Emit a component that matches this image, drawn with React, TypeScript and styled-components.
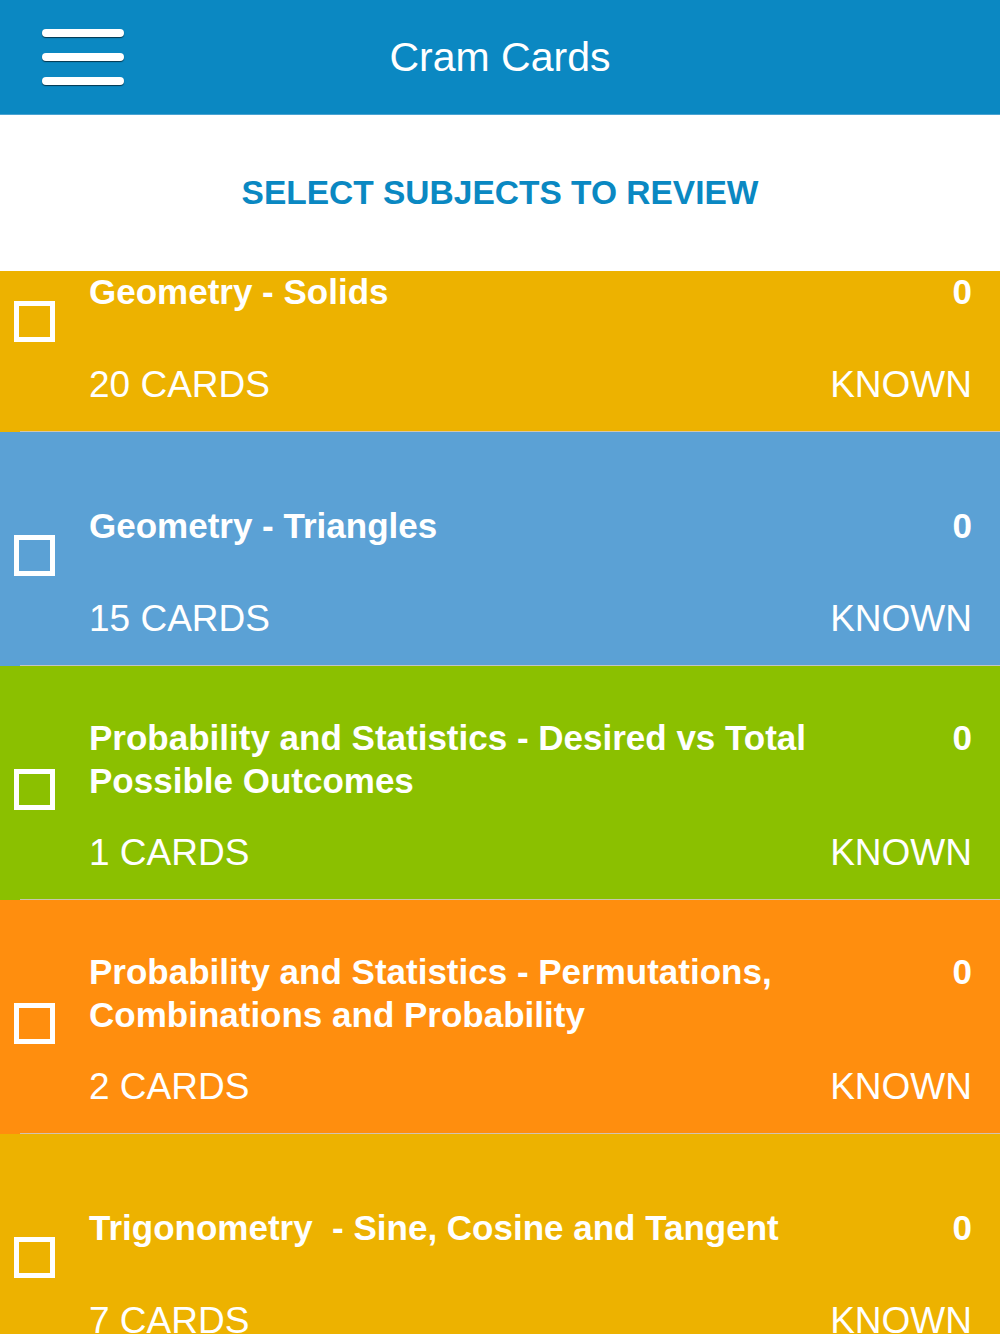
import React from "react";
import styled, { createGlobalStyle } from "styled-components";

const GlobalStyle = createGlobalStyle`
  html, body {
    margin: 0;
    padding: 0;
    background: #ffffff;
  }
  body {
    font-family: "Liberation Sans", Arial, Helvetica, sans-serif;
    -webkit-font-smoothing: antialiased;
  }
`;

const Screen = styled.div`
  width: 1000px;
  height: 1334px;
  display: flex;
  flex-direction: column;
  overflow: hidden;
`;

const Header = styled.header`
  flex: none;
  height: 114px;
  background: #0b88c2;
  border-bottom: 1px solid #4aa3d2;
  display: grid;
  grid-template-columns: 1fr auto 1fr;
  align-items: center;
  padding: 0 42px;
`;

const MenuButton = styled.button`
  justify-self: start;
  display: flex;
  flex-direction: column;
  gap: 16px;
  padding: 0;
  margin: 0;
  border: none;
  background: transparent;
  cursor: pointer;
`;

const Bar = styled.span`
  display: block;
  width: 82px;
  height: 8px;
  border-radius: 4px;
  background: #ffffff;
  box-shadow: 0 1px 1px rgba(0, 0, 0, 0.6);
`;

const HeaderTitle = styled.h1`
  margin: 0;
  color: #ffffff;
  font-size: 41px;
  font-weight: 400;
  line-height: 1;
`;

const Prompt = styled.h2`
  flex: none;
  height: 156px;
  margin: 0;
  display: flex;
  align-items: center;
  justify-content: center;
  color: #0a88c2;
  font-size: 33.5px;
  font-weight: 700;
`;

const ListViewport = styled.div`
  flex: 1;
  overflow: hidden;
`;

const List = styled.ul<{ $scroll: number }>`
  list-style: none;
  margin: 0;
  padding: 0;
  margin-top: ${(p) => -p.$scroll}px;
`;

const Row = styled.li<{ $bg: string }>`
  position: relative;
  height: 234px;
  box-sizing: border-box;
  display: flex;
  background: ${(p) => p.$bg};
  color: #ffffff;

  &::after {
    content: "";
    position: absolute;
    left: 20px;
    right: 0;
    bottom: 0;
    height: 1px;
    background: rgba(205, 200, 195, 0.9);
  }
`;

const CheckCell = styled.div`
  flex: none;
  width: 89px;
  box-sizing: border-box;
  display: flex;
  align-items: center;
  padding: 12px 0 0 14px;
`;

const CheckBox = styled.span`
  display: block;
  width: 41px;
  height: 41px;
  box-sizing: border-box;
  border: 5px solid #ffffff;
`;

const Body = styled.div`
  flex: 1;
  display: flex;
  flex-direction: column;
  padding: 21px 28px 0 0;
`;

const TitleRow = styled.div`
  height: 144px;
  display: flex;
  align-items: center;
`;

const Heading = styled.div`
  width: 100%;
  display: flex;
  align-items: flex-start;
  justify-content: space-between;
`;

const Title = styled.div`
  flex: 1;
  padding-right: 24px;
  font-size: 35px;
  font-weight: 700;
  line-height: 43px;
`;

const Count = styled.div`
  flex: none;
  font-size: 35px;
  font-weight: 700;
  line-height: 43px;
`;

const MetaRow = styled.div`
  display: flex;
  justify-content: space-between;
  font-size: 37px;
  font-weight: 400;
  line-height: 44px;
`;

type Subject = {
  title: string;
  cards: number;
  known: number;
  color: string;
};

const subjects: Subject[] = [
  { title: "Geometry - Solids", cards: 20, known: 0, color: "#edb200" },
  { title: "Geometry - Triangles", cards: 15, known: 0, color: "#5ba1d5" },
  {
    title: "Probability and Statistics - Desired vs Total Possible Outcomes",
    cards: 1,
    known: 0,
    color: "#8bc000",
  },
  {
    title:
      "Probability and Statistics - Permutations, Combinations and Probability",
    cards: 2,
    known: 0,
    color: "#ff8e0e",
  },
  {
    title: "Trigonometry\u00a0 - Sine, Cosine and Tangent",
    cards: 7,
    known: 0,
    color: "#edb200",
  },
];

const App: React.FC = () => {
  return (
    <Screen>
      <GlobalStyle />
      <Header>
        <MenuButton aria-label="menu">
          <Bar />
          <Bar />
          <Bar />
        </MenuButton>
        <HeaderTitle>Cram Cards</HeaderTitle>
      </Header>
      <Prompt>SELECT SUBJECTS TO REVIEW</Prompt>
      <ListViewport>
        {/* list is scrolled down a little */}
        <List $scroll={73}>
          {subjects.map((s) => (
            <Row key={s.title} $bg={s.color}>
              <CheckCell>
                <CheckBox />
              </CheckCell>
              <Body>
                <TitleRow>
                  <Heading>
                    <Title>{s.title}</Title>
                    <Count>{s.known}</Count>
                  </Heading>
                </TitleRow>
                <MetaRow>
                  <span>{s.cards} CARDS</span>
                  <span>KNOWN</span>
                </MetaRow>
              </Body>
            </Row>
          ))}
        </List>
      </ListViewport>
    </Screen>
  );
};

export default App;
